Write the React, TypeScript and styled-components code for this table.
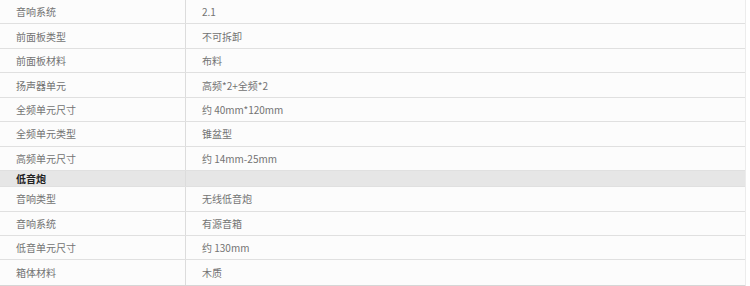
import React from "react";
import styled, { createGlobalStyle } from "styled-components";

const GlobalStyle = createGlobalStyle`
  body {
    margin: 0;
    background: #fff;
    font-family: "Noto Sans CJK SC", "Noto Sans", sans-serif;
  }
`;

const Table = styled.div`
  width: 746px;
  border-right: 1px solid #ececec;
  border-bottom: 2px solid #d6d6d6;
  box-sizing: border-box;
`;

const Row = styled.div<{ $section?: boolean }>`
  display: grid;
  grid-template-columns: 186px 1fr;
  height: ${(p) => (p.$section ? "16px" : "24.45px")};
  box-sizing: border-box;
  border-bottom: 1px solid #e0e0e0;
  background: ${(p) => (p.$section ? "#e6e6e6" : "#fcfcfc")};
  font-size: 10px;
  color: ${(p) => (p.$section ? "#222" : "#737373")};
  font-weight: ${(p) => (p.$section ? 700 : 400)};
  &:last-child {
    border-bottom: none;
  }
`;

const Cell = styled.div<{ $first?: boolean }>`
  display: flex;
  align-items: center;
  padding-left: ${(p) => (p.$first ? "16px" : "16px")};
  box-sizing: border-box;
  border-right: ${(p) => (p.$first ? "1px solid #dcdcdc" : "none")};
  white-space: nowrap;
`;

type Item = { name: string; value?: string; section?: boolean };

const items: Item[] = [
  { name: "音响系统", value: "2.1" },
  { name: "前面板类型", value: "不可拆卸" },
  { name: "前面板材料", value: "布料" },
  { name: "扬声器单元", value: "高频*2+全频*2" },
  { name: "全频单元尺寸", value: "约 40mm*120mm" },
  { name: "全频单元类型", value: "锥盆型" },
  { name: "高频单元尺寸", value: "约 14mm-25mm" },
  { name: "低音炮", section: true },
  { name: "音响类型", value: "无线低音炮" },
  { name: "音响系统", value: "有源音箱" },
  { name: "低音单元尺寸", value: "约 130mm" },
  { name: "箱体材料", value: "木质" },
];

export default function App() {
  return (
    <>
      <GlobalStyle />
      <Table>
        {items.map((it, i) => (
          <Row key={i} $section={it.section}>
            <Cell $first>{it.name}</Cell>
            <Cell>{it.value ?? ""}</Cell>
          </Row>
        ))}
      </Table>
    </>
  );
}
